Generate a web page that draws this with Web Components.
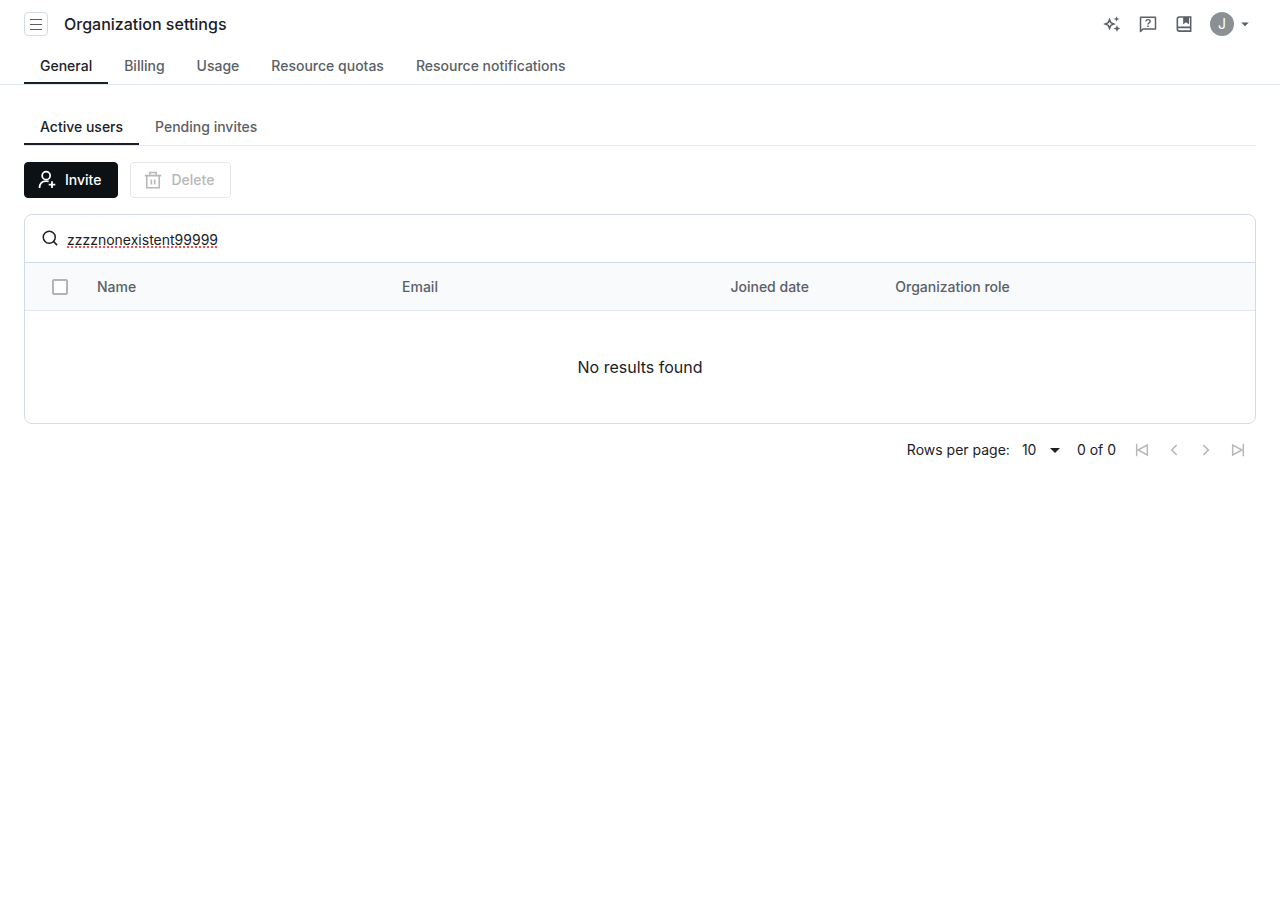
<!DOCTYPE html>
<html lang="en">
<head>
<meta charset="utf-8">
<meta name="viewport" content="width=device-width, initial-scale=1">
<title>Organization settings</title>
<style>
  :root {
    --text: #1c2127;
    --muted: #5a6066;
    --line: #cfdbe6;
    --line-soft: #e1e8ee;
    --disabled: #b8b8b8;
  }

  body {
    margin: 0;
    background: #fff;
    color: var(--text);
    font: 14px/20px Inter, "Liberation Sans", sans-serif;
  }

  main {
    padding: 24px;
  }

  .actions {
    display: flex;
    gap: 12px;
    padding: 16px 0;
  }
</style>
</head>
<body>
<page-header heading="Organization settings" initial="J"></page-header>
<tab-bar label="Settings" inset>
  <tab-item selected>General</tab-item>
  <tab-item>Billing</tab-item>
  <tab-item>Usage</tab-item>
  <tab-item>Resource quotas</tab-item>
  <tab-item>Resource notifications</tab-item>
</tab-bar>
<main>
  <tab-bar label="Users">
    <tab-item selected>Active users</tab-item>
    <tab-item>Pending invites</tab-item>
  </tab-bar>
  <div class="actions">
    <action-button icon="invite" primary>Invite</action-button>
    <action-button icon="trash" disabled>Delete</action-button>
  </div>
  <users-table query="zzzznonexistent99999"></users-table>
  <table-pager></table-pager>
</main>

<script>
const icons = {
  menu: '<path d="M6 7.5h12M6 12.5h12M6 17.5h12" stroke-width="1.2"/>',
  sparkles: '<path d="M9 6.7l1.6 3.7 3.7 1.6-3.7 1.6L9 17.3l-1.6-3.7L3.7 12l3.7-1.6z" stroke-width="1.8"/><path d="M17.5 2.6l1 2.4 2.4 1-2.4 1-1 2.4-1-2.4-2.4-1 2.4-1zM18 13.4l1.2 2.9 2.9 1.2-2.9 1.2-1.2 2.9-1.2-2.9-2.9-1.2 2.9-1.2z" fill="currentColor" stroke="none"/>',
  help: '<path d="M3 21V4h18v14H6z" stroke-width="1.8" stroke-linejoin="round"/><path d="M9.4 8.9c.2-1.3 1.2-2.1 2.6-2.1s2.6.8 2.6 2.1c0 1.6-2.6 1.8-2.6 3.8" stroke-width="1.7"/><path d="M11.1 13.9h1.8v1.8h-1.8z" fill="currentColor" stroke="none"/>',
  book: '<path d="M6.5 3.5H20v17H6.5A2.5 2.5 0 0 1 4 18V6a2.5 2.5 0 0 1 2.5-2.5zM4 18.2a2.2 2.2 0 0 1 2.5-2.2H20" stroke-width="1.9"/><path d="M11 3.5h7v8.7l-3.5-2.2-3.5 2.2z" fill="currentColor" stroke="none"/>',
  caret: '<path d="M7 10l5 5 5-5z" fill="currentColor" stroke="none"/>',
  invite: '<circle cx="11" cy="6.8" r="4.8" stroke-width="2.1"/><path d="M3 21.5c.2-5 3-8.2 8-8.2 1.2 0 2.2.2 3 .6M18 13.5v8M14 17.5h8" stroke-width="2.1"/>',
  trash: '<path d="M2.2 6.7h19.6M4.5 6.7v14.6h15V6.7M8.2 6.7V3h7.6v3.7M10 11.3v6M14 11.3v6" stroke-width="1.9"/>',
  search: '<circle cx="11" cy="11" r="8" stroke-width="2"/><path d="M16.8 16.8L21.5 21.5" stroke-width="2"/>',
  first: '<path d="M4 2.5v19M20 4.5v15L6 12z" stroke-width="2.2"/>',
  prev: '<path d="M16 4.5L8.5 12l7.5 7.5" stroke-width="2.4"/>',
  next: '<path d="M8 4.5l7.5 7.5L8 19.5" stroke-width="2.4"/>',
  last: '<path d="M20 2.5v19M4 4.5v15L18 12z" stroke-width="2.2"/>'
}

function icon(name, size) {
  return `<svg width="${size}" height="${size}" viewBox="0 0 24 24" fill="none" stroke="currentColor" aria-hidden="true">${icons[name]}</svg>`
}

const base = `
  * { box-sizing: border-box; }
  svg { display: block; flex: none; }
  button, input, select { font: inherit; color: inherit; }
  button { margin: 0; padding: 0; border: 0; background: none; cursor: pointer; }
`

class PageHeader extends HTMLElement {
  constructor() {
    super()
    this.attachShadow({ mode: 'open' })
  }

  connectedCallback() {
    this.shadowRoot.innerHTML = `
      <style>
        ${base}
        :host { display: block; }
        header { display: flex; align-items: center; gap: 16px; height: 48px; padding: 0 26px 0 24px; }
        h1 { flex: 1; margin: 0; font-size: 16px; line-height: 24px; font-weight: 500; }
        button { color: var(--muted); }
        .menu { display: flex; align-items: center; justify-content: center; width: 24px; height: 24px; border: 1px solid var(--line); border-radius: 4px; }
        .tools { display: flex; align-items: center; gap: 16px; }
        .account { display: flex; align-items: center; gap: 2px; }
        .avatar { display: grid; place-items: center; width: 24px; height: 24px; border-radius: 50%; background: #8b9094; color: #fff; font-size: 14px; }
      </style>
      <header>
        <button class="menu" aria-label="Open menu">${icon('menu', 24)}</button>
        <h1>${this.getAttribute('heading')}</h1>
        <div class="tools">
          <button aria-label="Assistant">${icon('sparkles', 20)}</button>
          <button aria-label="Help">${icon('help', 20)}</button>
          <button aria-label="Documentation">${icon('book', 20)}</button>
          <button class="account" aria-label="Account">
            <span class="avatar">${this.getAttribute('initial')}</span>${icon('caret', 18)}
          </button>
        </div>
      </header>
    `
  }
}

class TabBar extends HTMLElement {
  constructor() {
    super()
    this.attachShadow({ mode: 'open' })
  }

  connectedCallback() {
    this.shadowRoot.innerHTML = `
      <style>
        :host { display: block; border-bottom: 1px solid var(--line-soft); }
        :host([inset]) { padding: 0 24px; }
        nav { display: flex; }
      </style>
      <nav aria-label="${this.getAttribute('label')}"><slot></slot></nav>
    `
  }
}

class TabItem extends HTMLElement {
  constructor() {
    super()
    this.attachShadow({ mode: 'open' })
  }

  connectedCallback() {
    this.shadowRoot.innerHTML = `
      <style>
        ${base}
        :host { display: block; }
        button { display: block; height: 36px; padding: 2px 16px 0; border-bottom: 2px solid transparent; color: var(--muted); font-weight: 500; }
        :host([selected]) button { border-color: var(--text); color: var(--text); }
      </style>
      <button><slot></slot></button>
    `
    this.shadowRoot.querySelector('button').addEventListener('click', () => this.select())
  }

  select() {
    Array.from(this.parentElement.children).forEach(tab => {
      tab.toggleAttribute('selected', tab === this)
    })
  }
}

class ActionButton extends HTMLElement {
  constructor() {
    super()
    this.attachShadow({ mode: 'open' })
  }

  connectedCallback() {
    const disabled = this.hasAttribute('disabled') ? 'disabled' : ''
    this.shadowRoot.innerHTML = `
      <style>
        ${base}
        :host { display: block; }
        button { display: flex; align-items: center; gap: 8px; height: 36px; padding: 0 16px 0 12px; border: 1px solid #e6e6e6; border-radius: 4px; font-weight: 500; }
        button:disabled { color: var(--disabled); cursor: default; }
        :host([primary]) button { border-color: #0c1116; background: #0c1116; color: #fff; }
      </style>
      <button ${disabled}>${icon(this.getAttribute('icon'), 20)}<slot></slot></button>
    `
  }
}

class UsersTable extends HTMLElement {
  constructor() {
    super()
    this.attachShadow({ mode: 'open' })
  }

  connectedCallback() {
    this.shadowRoot.innerHTML = `
      <style>
        ${base}
        :host { display: block; border: 1px solid var(--line); border-radius: 8px; overflow: hidden; }
        label { display: flex; align-items: center; gap: 8px; height: 48px; padding: 0 16px 2px; border-bottom: 1px solid var(--line); }
        .query { flex: 1; min-width: 0; height: 24px; margin-top: 4px; padding: 0; border: 0; outline: 0; background: none; text-decoration: underline dotted #f0524f 2px; text-underline-offset: 1px; text-decoration-skip-ink: none; }
        table { width: 100%; border-collapse: separate; border-spacing: 0; table-layout: fixed; }
        th { height: 48px; padding: 0 16px; border-bottom: 1px solid var(--line-soft); background: #f8fafc; color: var(--muted); font-weight: 500; text-align: left; }
        th.check { width: 56px; padding: 0 0 0 27px; }
        .name { width: 24.8%; }
        .email { width: 26.7%; }
        .joined { width: 13.4%; }
        input[type=checkbox] { display: block; appearance: none; width: 16px; height: 16px; margin: 0; border: 2px solid #b4b4b4; border-radius: 2px; background: #fff; }
        td { height: 112px; padding: 0; text-align: center; font-size: 16px; line-height: 24px; }
      </style>
      <label>${icon('search', 18)}<input class="query" type="text" aria-label="Search users" value="${this.getAttribute('query')}"></label>
      <table>
        <thead>
          <tr>
            <th class="check"><input type="checkbox" aria-label="Select all users"></th>
            <th class="name">Name</th>
            <th class="email">Email</th>
            <th class="joined">Joined date</th>
            <th>Organization role</th>
          </tr>
        </thead>
        <tbody>
          <tr><td colspan="5">No results found</td></tr>
        </tbody>
      </table>
    `
  }
}

class TablePager extends HTMLElement {
  constructor() {
    super()
    this.attachShadow({ mode: 'open' })
  }

  connectedCallback() {
    this.shadowRoot.innerHTML = `
      <style>
        ${base}
        :host { display: flex; align-items: center; justify-content: flex-end; height: 52px; padding-right: 2px; }
        .size { display: grid; align-items: center; margin: 0 10px 0 12px; }
        select { grid-area: 1 / 1; width: 45px; height: 24px; padding: 0; border: 0; background: none; appearance: none; }
        .size svg { grid-area: 1 / 1; justify-self: end; pointer-events: none; }
        .pages { display: flex; margin-left: 10px; }
        .pages button { display: grid; place-items: center; width: 32px; height: 32px; color: var(--disabled); cursor: default; }
      </style>
      <label for="rows">Rows per page:</label>
      <div class="size">
        <select id="rows">
          <option>10</option>
          <option>25</option>
          <option>50</option>
        </select>
        ${icon('caret', 24)}
      </div>
      <span>0 of 0</span>
      <div class="pages">
        <button disabled aria-label="First page">${icon('first', 16)}</button>
        <button disabled aria-label="Previous page">${icon('prev', 16)}</button>
        <button disabled aria-label="Next page">${icon('next', 16)}</button>
        <button disabled aria-label="Last page">${icon('last', 16)}</button>
      </div>
    `
  }
}

customElements.define('page-header', PageHeader)
customElements.define('tab-bar', TabBar)
customElements.define('tab-item', TabItem)
customElements.define('action-button', ActionButton)
customElements.define('users-table', UsersTable)
customElements.define('table-pager', TablePager)
</script>
</body>
</html>
